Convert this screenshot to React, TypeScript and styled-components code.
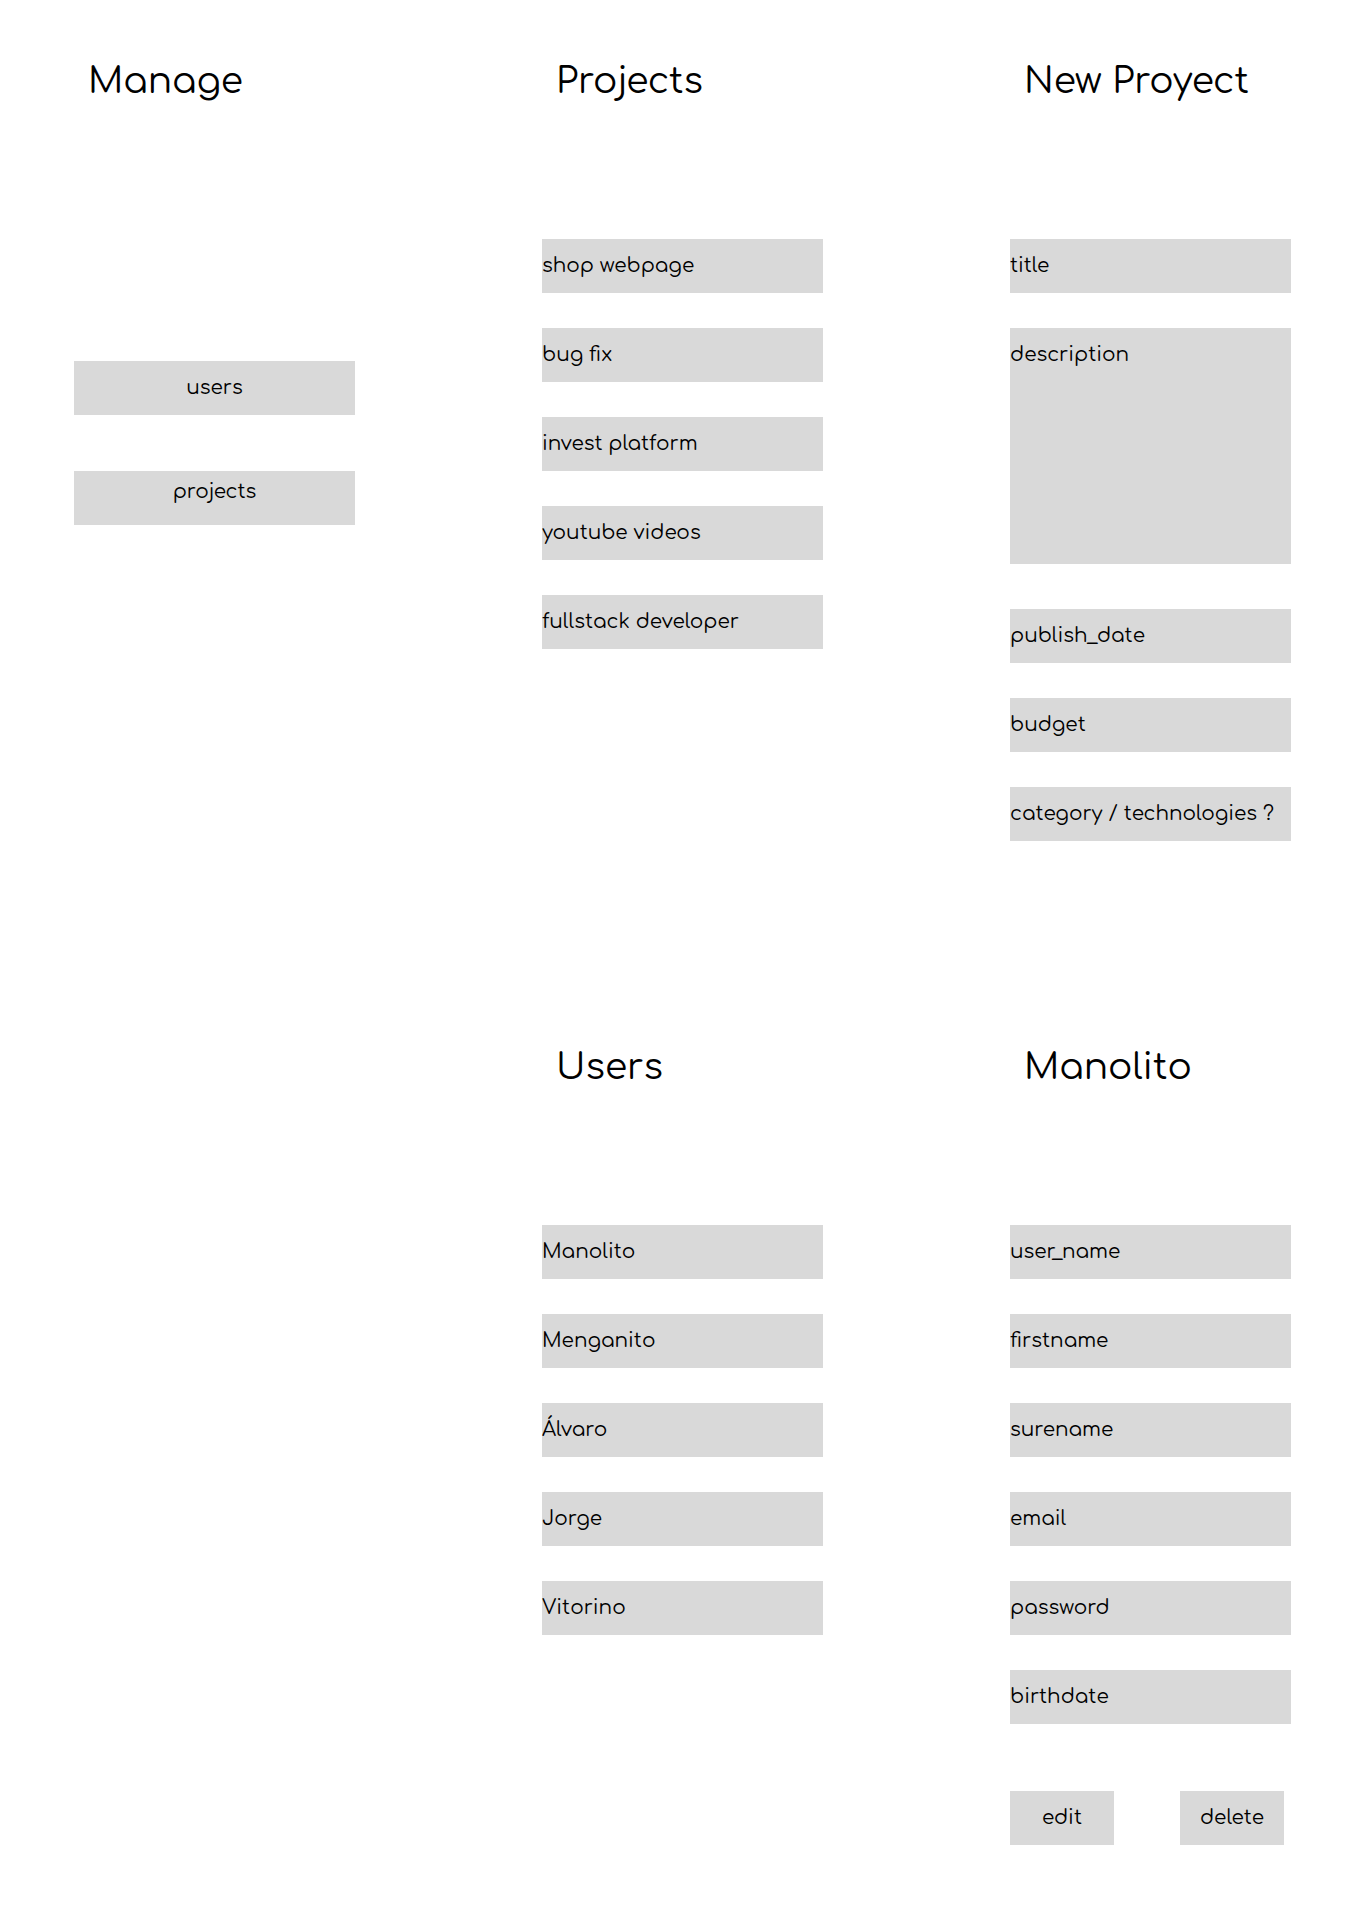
import React from "react";
import styled, { createGlobalStyle } from "styled-components";

const GlobalStyle = createGlobalStyle`
  *, *::before, *::after { box-sizing: border-box; }
  body {
    margin: 0;
    background: #fff;
    color: #000;
    font-family: Comfortaa, Inter, sans-serif;
    font-size: 20px;
    font-weight: 400;
    line-height: 24px;
  }
`;

const Board = styled.main`
  display: grid;
  grid-template-columns: repeat(3, minmax(0, 1fr));
  column-gap: 187px;
  row-gap: 201px;
  padding: 56px 73px 65px 74px;
`;

const Screen = styled.section<{ $column?: number }>`
  grid-column: ${({ $column }) => $column ?? "auto"};
`;

const Title = styled.h1`
  margin: 0;
  padding-left: 14px;
  font-size: 36px;
  font-weight: 400;
  line-height: 50px;
  white-space: nowrap;
`;

const Stack = styled.ul<{ $top?: number; $gap?: number }>`
  display: flex;
  flex-direction: column;
  gap: ${({ $gap = 35 }) => $gap}px;
  margin: ${({ $top = 133 }) => $top}px 0 0;
  padding: 0;
  list-style: none;
`;

const RowLink = styled.a`
  display: flex;
  align-items: center;
  height: 54px;
  background: #d9d9d9;
  color: inherit;
  text-decoration: none;
  white-space: nowrap;
`;

const Button = styled.button<{ $raised?: boolean }>`
  display: flex;
  align-items: center;
  justify-content: center;
  width: 100%;
  height: 54px;
  padding: 0 0 ${({ $raised }) => ($raised ? 12 : 0)}px;
  border: 0;
  background: #d9d9d9;
  color: inherit;
  font: inherit;
  cursor: pointer;
`;

const Form = styled.form`
  display: flex;
  flex-direction: column;
  gap: 35px;
  margin-top: 133px;
`;

const Field = styled.input`
  display: block;
  width: 100%;
  height: 54px;
  padding: 0 0 2px;
  border: 0;
  border-radius: 0;
  background: #d9d9d9;
  color: inherit;
  font: inherit;
  &::placeholder { color: #000; opacity: 1; }
`;

const TextArea = styled.textarea`
  display: block;
  width: 100%;
  height: 236px;
  margin-bottom: 10px;
  padding: 15px 0;
  border: 0;
  border-radius: 0;
  background: #d9d9d9;
  color: inherit;
  font: inherit;
  resize: none;
  &::placeholder { color: #000; opacity: 1; }
`;

const Actions = styled.div`
  display: grid;
  grid-template-columns: repeat(2, 104px);
  column-gap: 66px;
  margin-top: 32px;
`;

const projects = ["shop webpage", "bug fix", "invest platform", "youtube videos", "fullstack developer"];
const users = ["Manolito", "Menganito", "Álvaro", "Jorge", "Vitorino"];
const projectDetails = ["publish_date", "budget", "category / technologies ?"];
const userFields = ["user_name", "firstname", "surename", "email", "password", "birthdate"];

function LinkList({ items }: { items: string[] }) {
  return (
    <Stack>
      {items.map((item) => (
        <li key={item}>
          <RowLink href="#">{item}</RowLink>
        </li>
      ))}
    </Stack>
  );
}

function TextField({ name }: { name: string }) {
  return <Field type="text" name={name} aria-label={name} placeholder={name} />;
}

export default function App() {
  return (
    <>
      <GlobalStyle />
      <Board>
        <Screen>
          <Title>Manage</Title>
          <Stack $top={255} $gap={56}>
            <li><Button type="button">users</Button></li>
            <li><Button type="button" $raised>projects</Button></li>
          </Stack>
        </Screen>
        <Screen>
          <Title>Projects</Title>
          <LinkList items={projects} />
        </Screen>
        <Screen>
          <Title>New Proyect</Title>
          <Form>
            <TextField name="title" />
            <TextArea name="description" aria-label="description" placeholder="description" />
            {projectDetails.map((name) => <TextField key={name} name={name} />)}
          </Form>
        </Screen>
        <Screen $column={2}>
          <Title>Users</Title>
          <LinkList items={users} />
        </Screen>
        <Screen $column={3}>
          <Title>Manolito</Title>
          <Form>
            {userFields.map((name) => <TextField key={name} name={name} />)}
            <Actions>
              <Button type="button">edit</Button>
              <Button type="button">delete</Button>
            </Actions>
          </Form>
        </Screen>
      </Board>
    </>
  );
}
